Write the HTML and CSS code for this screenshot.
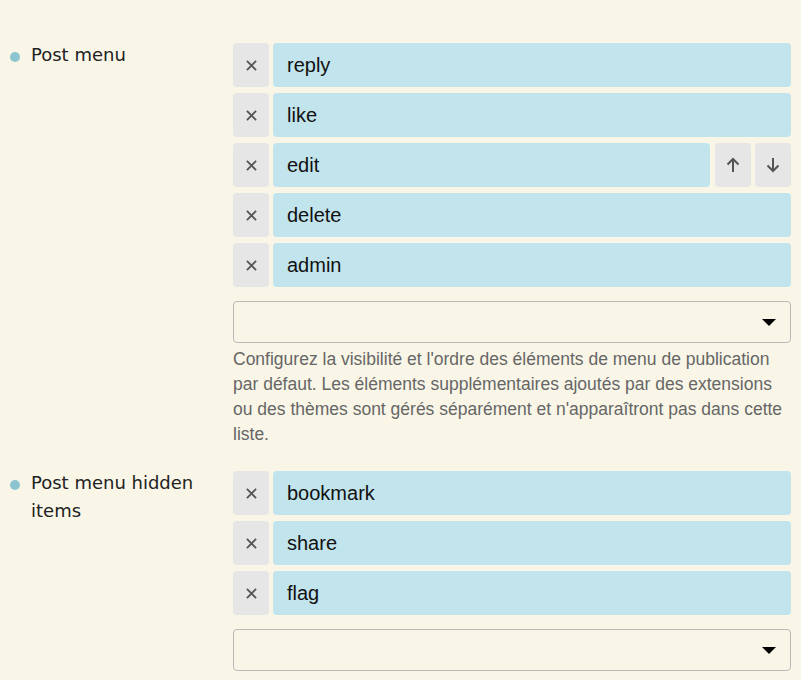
FILE: index.html
```html
<!DOCTYPE html>
<html>
<head>
  <title>Post menu settings</title>
  <link rel="stylesheet" href="styles.css">
</head>
<body>
  <div class="settings">

    <div class="setting">
      <div class="setting-label"><span class="dot"></span><span>Post menu</span></div>
      <div class="setting-value">
        <div class="item-list">
          <div class="item-row">
            <button class="btn-icon"><svg class="x-icon" viewBox="0 0 12 12"><path d="M1 1l10 10M11 1L1 11"/></svg></button>
            <div class="item-name">reply</div>
          </div>
          <div class="item-row">
            <button class="btn-icon"><svg class="x-icon" viewBox="0 0 12 12"><path d="M1 1l10 10M11 1L1 11"/></svg></button>
            <div class="item-name">like</div>
          </div>
          <div class="item-row">
            <button class="btn-icon"><svg class="x-icon" viewBox="0 0 12 12"><path d="M1 1l10 10M11 1L1 11"/></svg></button>
            <div class="item-name">edit</div>
            <button class="btn-icon btn-move">
              <svg class="arrow-icon" viewBox="0 0 14 16"><path d="M7 15V2M1.5 7.5L7 2l5.5 5.5"/></svg>
            </button>
            <button class="btn-icon">
              <svg class="arrow-icon" viewBox="0 0 14 16"><path d="M7 1v13M1.5 8.5L7 14l5.5-5.5"/></svg>
            </button>
          </div>
          <div class="item-row">
            <button class="btn-icon"><svg class="x-icon" viewBox="0 0 12 12"><path d="M1 1l10 10M11 1L1 11"/></svg></button>
            <div class="item-name">delete</div>
          </div>
          <div class="item-row">
            <button class="btn-icon"><svg class="x-icon" viewBox="0 0 12 12"><path d="M1 1l10 10M11 1L1 11"/></svg></button>
            <div class="item-name">admin</div>
          </div>
        </div>
        <div class="select-box"><span class="caret"></span></div>
        <div class="desc">Configurez la visibilité et l'ordre des éléments de menu de publication par défaut. Les éléments supplémentaires ajoutés par des extensions ou des thèmes sont gérés séparément et n'apparaîtront pas dans cette liste.</div>
      </div>
    </div>

    <div class="setting">
      <div class="setting-label"><span class="dot"></span><span>Post menu hidden items</span></div>
      <div class="setting-value">
        <div class="item-list">
          <div class="item-row">
            <button class="btn-icon"><svg class="x-icon" viewBox="0 0 12 12"><path d="M1 1l10 10M11 1L1 11"/></svg></button>
            <div class="item-name">bookmark</div>
          </div>
          <div class="item-row">
            <button class="btn-icon"><svg class="x-icon" viewBox="0 0 12 12"><path d="M1 1l10 10M11 1L1 11"/></svg></button>
            <div class="item-name">share</div>
          </div>
          <div class="item-row">
            <button class="btn-icon"><svg class="x-icon" viewBox="0 0 12 12"><path d="M1 1l10 10M11 1L1 11"/></svg></button>
            <div class="item-name">flag</div>
          </div>
        </div>
        <div class="select-box"><span class="caret"></span></div>
      </div>
    </div>

  </div>
</body>
</html>
```

FILE: styles.css
```css
body {
  margin: 0;
  background-color: #f9f6e8;
  font-family: "Liberation Sans", Arial, sans-serif;
}

.settings {
  padding: 43px 10px 0 10px;
}

.setting {
  display: flex;
  margin-bottom: 24px;
}

.setting-label {
  width: 223px;
  display: flex;
  align-items: flex-start;
  gap: 11px;
  margin-top: -2px;
  font-family: "DejaVu Sans", sans-serif;
  font-size: 18px;
  line-height: 28px;
  color: #222222;
  padding-right: 20px;
  box-sizing: border-box;
}

.dot {
  flex: none;
  width: 10px;
  height: 10px;
  margin-top: 11px;
  border-radius: 50%;
  background-color: #8cc4cf;
}

.setting-value {
  width: 558px;
}

.item-list {
  display: flex;
  flex-direction: column;
  gap: 6px;
}

.item-row {
  display: flex;
  gap: 4px;
  height: 44px;
}

.btn-icon {
  width: 36px;
  flex: none;
  border: none;
  border-radius: 4px;
  background-color: #e6e6e6;
  padding: 0;
  display: flex;
  align-items: center;
  justify-content: center;
}

.btn-move {
  margin-left: 1px;
}

.x-icon {
  width: 11px;
  height: 11px;
  fill: none;
  stroke: #555555;
  stroke-width: 2;
}

.arrow-icon {
  width: 14px;
  height: 16px;
  fill: none;
  stroke: #555555;
  stroke-width: 2;
}

.item-name {
  flex: 1;
  background-color: #c2e4ec;
  border-radius: 4px;
  padding-left: 14px;
  font-size: 20px;
  line-height: 44px;
  color: #111111;
}

.select-box {
  margin-top: 14px;
  height: 40px;
  border: 1px solid #b9b9b9;
  border-radius: 4px;
  display: flex;
  align-items: center;
  justify-content: flex-end;
  padding-right: 14px;
}

.caret {
  width: 0;
  height: 0;
  border-left: 7px solid transparent;
  border-right: 7px solid transparent;
  border-top: 7px solid #000000;
}

.desc {
  margin-top: 4px;
  font-size: 17.5px;
  line-height: 25px;
  color: #666666;
}
```
